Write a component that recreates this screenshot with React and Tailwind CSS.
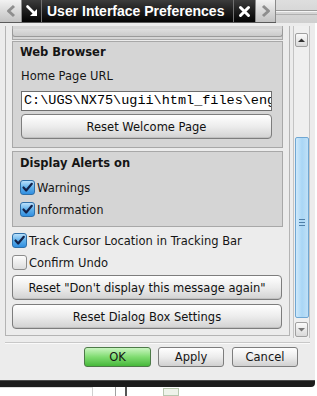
import React from "react";

function Check({ checked }) {
  if (checked) {
    return (
      <div className="w-[15px] h-[15px] shrink-0 rounded-[3px] border border-[#2f6fa8] bg-linear-to-b from-[#b9e0fb] via-[#5fb0ea] to-[#2f8ee0] flex items-center justify-center">
        <svg width="13" height="13" viewBox="0 0 13 13">
          <path d="M2.5 6.5 L5.2 9.5 L10.8 2.8" fill="none" stroke="#14224a" strokeWidth="2.2" strokeLinecap="round" strokeLinejoin="round" />
        </svg>
      </div>
    );
  }
  return (
    <div className="w-[15px] h-[15px] shrink-0 rounded-[3px] border border-[#8c8c8c] bg-linear-to-b from-[#fdfdfd] to-[#dcdcdc]" />
  );
}

function Btn({ children, className = "" }) {
  return (
    <div
      className={
        "h-[25px] rounded-[4px] border border-[#7d7d7d] bg-linear-to-b from-[#ffffff] via-[#ececec] to-[#d2d2d2] flex items-center justify-center text-[#111] shadow-[inset_0_-1px_0_#c0c0c0] " +
        className
      }
    >
      {children}
    </div>
  );
}

function ActBtn({ children, className = "", green = false }) {
  return (
    <div
      className={
        "h-[20px] rounded-[3px] border flex items-center justify-center " +
        (green
          ? "border-[#4d7a48] bg-linear-to-b from-[#c9f5c0] via-[#7fdc70] to-[#46b83a] "
          : "border-[#7d7d7d] bg-linear-to-b from-[#ffffff] via-[#ececec] to-[#d0d0d0] ") +
        className
      }
    >
      {children}
    </div>
  );
}

export default function App() {
  return (
    <div className="w-[317px] h-[396px] bg-white overflow-hidden font-['DejaVu_Sans',sans-serif] text-[11.5px] leading-[14px] text-[#151515]">
      {/* Title bar */}
      <div className="flex h-[23px]">
        <div className="flex h-[23px] border-b border-[#5a5a5a]">
          <div className="w-[22px] h-[22px] bg-linear-to-b from-[#f2f2f2] to-[#c2c2c2] border-r border-[#8a8a8a] flex items-center justify-center">
            <svg width="12" height="14" viewBox="0 0 12 14">
              <path d="M9 2 L3.5 7 L9 12" fill="none" stroke="#8e8e8e" strokeWidth="3" strokeLinejoin="round" />
            </svg>
          </div>
          <div className="w-[20px] h-[22px] bg-linear-to-b from-[#3c3c3c] to-[#050505] border-r border-[#707070] flex items-center justify-center">
            <svg width="14" height="14" viewBox="0 0 14 14">
              <path d="M2.5 2.5 L8.5 8.5" stroke="white" strokeWidth="2.6" strokeLinecap="round" />
              <path d="M12 5 L12 12 L5 12 Z" fill="white" />
            </svg>
          </div>
          <div className="w-[192px] h-[22px] bg-linear-to-b from-[#3c3c3c] to-[#050505] border-r border-[#707070] flex items-center pl-[5px] text-white font-bold font-['Liberation_Sans',sans-serif] text-[14px] whitespace-nowrap overflow-hidden">
            User Interface Preferences
          </div>
          <div className="w-[22px] h-[22px] bg-linear-to-b from-[#3c3c3c] to-[#050505] border-r border-[#8a8a8a] flex items-center justify-center">
            <svg width="13" height="13" viewBox="0 0 13 13">
              <path d="M2.5 2.5 L10.5 10.5 M10.5 2.5 L2.5 10.5" stroke="white" strokeWidth="3" strokeLinecap="round" />
            </svg>
          </div>
          <div className="w-[20px] h-[22px] bg-linear-to-b from-[#f2f2f2] to-[#c2c2c2] border-r border-[#8a8a8a] flex items-center justify-center">
            <svg width="12" height="14" viewBox="0 0 12 14">
              <path d="M3 2 L8.5 7 L3 12" fill="none" stroke="#8e8e8e" strokeWidth="3" strokeLinejoin="round" />
            </svg>
          </div>
        </div>
        <div className="flex-1 h-[23px] bg-linear-to-b from-[#dedede] to-[#cfcfcf] flex flex-col">
          <div className="h-[10px]" />
          <div className="h-[1px] bg-[#9a9a9a]" />
          <div className="h-[1px] bg-[#f4f4f4]" />
          <div className="h-[2px]" />
          <div className="h-[1px] bg-[#b0b0b0]" />
        </div>
      </div>

      {/* Dialog body */}
      <div className="w-[315px] h-[357px] bg-[#ececec] flex flex-col">
        <div className="flex h-[313px] pt-[3px]">
          {/* Scroll panel */}
          <div className="ml-[5px] w-[285px] h-[310px] border-l border-r border-b border-[#b4b4b4] pl-[6px] pr-[6px] flex flex-col overflow-hidden">
            {/* Top group remnant */}
            <div className="h-[14px] bg-[#d5d5d5] border-l border-r border-b border-[#a8a8a8] flex flex-col">
              <div className="h-[8px] mt-[3px] mx-[-1px] rounded-b-[3px] border border-t-0 border-[#9a9a9a] bg-linear-to-b from-[#dedede] to-[#cacaca]" />
            </div>
            {/* Web Browser group */}
            <div className="mt-[1px] h-[107px] bg-[#d5d5d5] border border-[#a8a8a8] flex flex-col pl-[7px] pr-[10px]">
              <div className="mt-[3px] font-bold">Web Browser</div>
              <div className="mt-[10px] pl-[1px]">Home Page URL</div>
              <div className="mt-[8px] ml-[1px] h-[20px] bg-white border border-[#6e6e6e] flex items-center pl-[2px] overflow-hidden whitespace-nowrap font-['Liberation_Mono',monospace] text-[13.5px] text-black">
                C:\UGS\NX75\ugii\html_files\eng
              </div>
              <Btn className="mt-[3px] ml-[1px]">Reset Welcome Page</Btn>
            </div>
            {/* Display Alerts group */}
            <div className="mt-[3px] h-[76px] bg-[#d5d5d5] border border-[#a8a8a8] flex flex-col pl-[7px]">
              <div className="mt-[4px] font-bold">Display Alerts on</div>
              <div className="mt-[10px] flex items-center gap-[2px]">
                <Check checked />
                <span>Warnings</span>
              </div>
              <div className="mt-[7px] flex items-center gap-[2px]">
                <Check checked />
                <span>Information</span>
              </div>
            </div>
            <div className="mt-[6px] flex items-center gap-[2px]">
              <Check checked />
              <span>Track Cursor Location in Tracking Bar</span>
            </div>
            <div className="mt-[7px] flex items-center gap-[2px]">
              <Check />
              <span>Confirm Undo</span>
            </div>
            <Btn className="mt-[5px] mr-[1px]">Reset "Don't display this message again"</Btn>
            <Btn className="mt-[4px] mr-[1px]">Reset Dialog Box Settings</Btn>
          </div>
          {/* Scrollbar */}
          <div className="ml-[3px] w-[17px] h-[312px] bg-[#efefef] border-l border-r border-[#c4c4c4] flex flex-col items-center">
            <div className="mt-[7px] w-[13px] h-[14px] border border-[#a0a0a0] rounded-[2px] bg-linear-to-b from-[#fafafa] to-[#dadada] flex items-center justify-center">
              <svg width="7" height="5" viewBox="0 0 7 5"><path d="M0 4 L3.5 0.5 L7 4 Z" fill="#333" /></svg>
            </div>
            <div className="mt-[90px] w-[14px] h-[181px] border border-[#6fa7d3] rounded-[2px] bg-linear-to-r from-[#cfe9fb] via-[#a9d6f5] to-[#bfe0f7] flex items-center justify-center">
              <div className="flex flex-col gap-[2px] -mt-[10px]">
                <div className="w-[6px] h-[1px] bg-[#4f7fa8]" />
                <div className="w-[6px] h-[1px] bg-[#4f7fa8]" />
                <div className="w-[6px] h-[1px] bg-[#4f7fa8]" />
              </div>
            </div>
            <div className="mt-[4px] w-[13px] h-[15px] border border-[#a0a0a0] rounded-[2px] bg-linear-to-b from-[#fafafa] to-[#dadada] flex items-center justify-center">
              <svg width="7" height="5" viewBox="0 0 7 5"><path d="M0 1 L3.5 4.5 L7 1 Z" fill="#777" /></svg>
            </div>
          </div>
        </div>
        {/* Separator */}
        <div className="mt-[6px] mx-[5px] h-[1px] bg-[#c8c8c8]" />
        <div className="h-[1px] mx-[5px] bg-[#fafafa]" />
        {/* Action buttons */}
        <div className="mt-[3px] flex justify-end pr-[17px] gap-[7px]">
          <ActBtn green className="w-[67px]">OK</ActBtn>
          <ActBtn className="w-[66px]">Apply</ActBtn>
          <ActBtn className="w-[66px] ml-[1px]">Cancel</ActBtn>
        </div>
      </div>
      {/* Bottom shadow bar */}
      <div className="w-[315px] h-[7px] bg-[#1c1c1c] border-t border-[#4a4a4a] rounded-br-[4px]" />
      {/* Background window remnants */}
      <div className="flex h-[9px]">
        <div className="w-[92px] border-t border-[#dcdcdc]" />
        <div className="w-[1px] bg-[#d0d0d0]" />
        <div className="w-[22px]" />
        <div className="w-[1px] bg-[#a0a0a0]" />
        <div className="w-[9px]" />
        <div className="w-[2px] bg-[#555]" />
        <div className="w-[36px]" />
        <div className="w-[16px] mt-[1px] border border-[#b8c8b0] bg-[#eef3ea]" />
      </div>
    </div>
  );
}
